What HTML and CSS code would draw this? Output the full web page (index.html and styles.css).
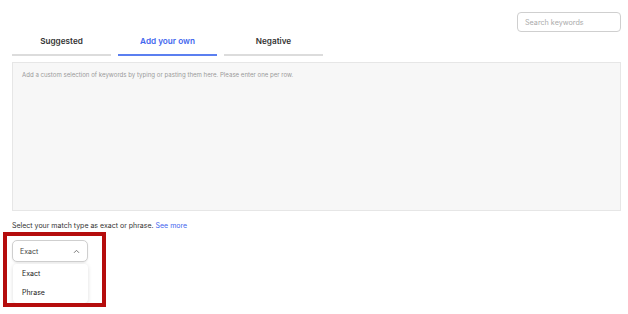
FILE: index.html
```html
<!DOCTYPE html>
<html>
	<head>
		<meta charset="utf-8">
		<title>Keywords</title>
		<link rel="stylesheet" href="styles.css">
	</head>
	<body>
		<div class="keywords">
			<div class="keywords__top">
				<input class="keywords__search" type="text" placeholder="Search keywords">
			</div>
			<ul class="keywords__tabs">
				<li><button type="button">Suggested</button></li>
				<li class="on"><button type="button">Add your own</button></li>
				<li><button type="button">Negative</button></li>
			</ul>
			<textarea class="keywords__input" placeholder="Add a custom selection of keywords by typing or pasting them here. Please enter one per row."></textarea>
			<p class="keywords__hint">Select your match type as exact or phrase. <a href="#">See more</a></p>
			<div class="match">
				<div class="match__select">
					<span>Exact</span>
					<svg width="7" height="5" viewBox="0 0 7 5"><path d="M1 3.8 L3.5 1.3 L6 3.8" fill="none" stroke="#777" stroke-width="1"/></svg>
				</div>
				<div class="match__list">
					<div class="match__item">Exact</div>
					<div class="match__item">Phrase</div>
				</div>
			</div>
		</div>
		<div class="highlight"></div>
	</body>
</html>
```
FILE: styles.css
```css
html, body, ul, li, p, button { margin:0; padding:0; }
ul, li { list-style:none; }
body { background:#fff; font-family:Inter, "Liberation Sans", sans-serif; color:#333; }

.keywords { display:flex; flex-direction:column; padding:12px 7px 0 12px; }
.keywords__top { display:flex; justify-content:flex-end; }
.keywords__search { box-sizing:border-box; width:104px; height:20px; padding:0 7px; border:1px solid #cfcfcf; border-radius:4px; font-family:inherit; font-size:7.2px; color:#333; outline:none; }
.keywords__search::placeholder { color:#aaa; }

.keywords__tabs { display:flex; gap:7px; }
.keywords__tabs li { width:99px; }
.keywords__tabs button { display:block; box-sizing:border-box; width:100%; padding:4px 0 8px; border:0; border-bottom:2px solid #dcdcdc; background:none; font-family:inherit; font-size:8.2px; line-height:10px; font-weight:600; color:#333; }
.keywords__tabs li.on button { border-bottom-color:#5b7ff0; color:#3f66ee; }

.keywords__input { box-sizing:border-box; display:block; width:100%; height:149px; margin-top:6px; padding:8px 9px; border:1px solid #e6e6e6; background:#f7f7f7; font-family:inherit; font-size:6.1px; resize:none; outline:none; }
.keywords__input::placeholder { color:#9a9a9a; }

.keywords__hint { margin-top:10px; font-size:7px; line-height:10px; color:#333; }
.keywords__hint a { color:#3f66ee; text-decoration:none; }

.match { margin-top:9px; width:76px; }
.match__select { box-sizing:border-box; display:flex; align-items:center; justify-content:space-between; width:76px; height:22px; padding:0 7px; border:1px solid #cfcfcf; border-radius:5px; background:#fff; font-size:7px; color:#444; box-shadow:0 1px 2px rgba(0,0,0,.08); }
.match__list { box-sizing:border-box; width:75px; margin:2px 0 0 1px; padding:0 0 1px; background:#fff; border-radius:4px; box-shadow:0 1px 4px rgba(0,0,0,.14); }
.match__item { padding:0 9px; font-size:7px; line-height:19px; color:#222; }

.highlight { position:absolute; left:3px; top:232px; width:95px; height:67px; border:4px solid #b50d0d; }
```
